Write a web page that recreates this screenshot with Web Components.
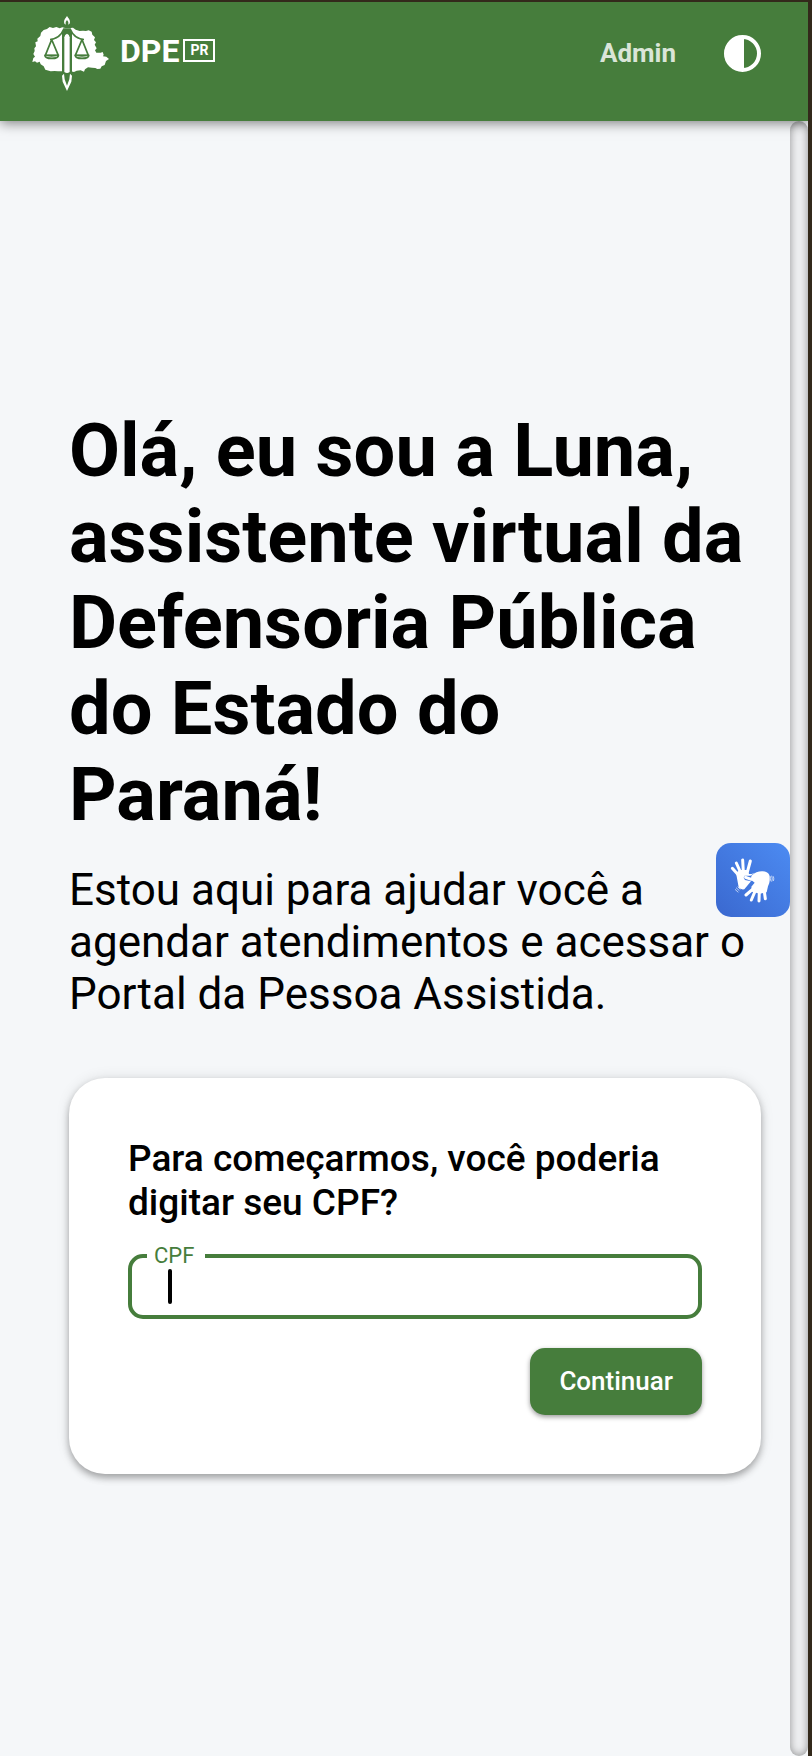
<!DOCTYPE html>
<html lang="pt-BR">
<head>
<meta charset="utf-8">
<meta name="viewport" content="width=device-width, initial-scale=1">
<title>Luna - Defensoria Pública do Estado do Paraná</title>
<style>
    body {
        margin: 0;
        font-family: Roboto, "Liberation Sans", sans-serif;
        color: #000;
        --green: #467d3c;
        --page: #f5f7f9;
        --frame: #33291b;
    }
</style>
</head>
<body>
<luna-app>
    <luna-header slot="header">
        <dpe-logo slot="logo"></dpe-logo>
        <a slot="nav" href="#admin">Admin</a>
        <contrast-toggle slot="nav"></contrast-toggle>
    </luna-header>
    <luna-greeting>
        <span slot="title">Olá, eu sou a Luna, assistente virtual da Defensoria Pública do Estado do Paraná!</span>
        <span slot="text">Estou aqui para ajudar você a agendar atendimentos e acessar o Portal da Pessoa Assistida.</span>
    </luna-greeting>
    <cpf-card>Para começarmos, você poderia digitar seu CPF?</cpf-card>
    <libras-button slot="float"></libras-button>
</luna-app>

<script>
class BaseElement extends HTMLElement {
    constructor() {
        super();
        this.attachShadow({ mode: 'open' });
        this.shadowRoot.innerHTML = this.getStyles() + this.getTemplate();
    }
}

class LunaApp extends BaseElement {
    getTemplate() {
        return `
        <slot name="header"></slot>
        <div class="body">
            <main><slot></slot></main>
            <div class="track"></div>
            <slot name="float"></slot>
        </div>
        `;
    }
    getStyles() {
        return `
            <style>
                :host {
                    display: flex;
                    flex-direction: column;
                    box-sizing: border-box;
                    min-height: 100vh;
                    border-top: 2px solid var(--frame);
                    border-right: 4px solid var(--frame);
                    background: var(--page);
                }
                .body {
                    flex: 1;
                    display: flex;
                    position: relative;
                }
                main {
                    flex: 1;
                    display: flex;
                    flex-direction: column;
                    justify-content: center;
                    gap: 58px;
                    padding: 28px 29px 24px 69px;
                }
                .track {
                    width: 18px;
                    border-radius: 9px;
                    background: #eeeff1;
                    box-shadow: inset 0 0 8px rgba(0, 0, 0, .4);
                }
            </style>
        `;
    }
}

class LunaHeader extends BaseElement {
    getTemplate() {
        return `
        <header>
            <slot name="logo"></slot>
            <nav><slot name="nav"></slot></nav>
        </header>
        `;
    }
    getStyles() {
        return `
            <style>
                :host {
                    display: block;
                    position: relative;
                    z-index: 1;
                }
                header {
                    display: flex;
                    justify-content: space-between;
                    align-items: flex-start;
                    height: 119px;
                    box-sizing: border-box;
                    padding: 14px 47px 0 32px;
                    background: var(--green);
                    box-shadow: 0 2px 12px rgba(0, 0, 0, .5);
                    clip-path: inset(0 0 -30px 0);
                }
                nav {
                    display: flex;
                    align-items: center;
                    gap: 48px;
                    height: 74px;
                }
                ::slotted(a) {
                    color: #dae5d8;
                    font-size: 26px;
                    font-weight: 700;
                    text-decoration: none;
                }
            </style>
        `;
    }
}

class DpeLogo extends BaseElement {
    getTemplate() {
        return `
        <svg width="78" height="75" viewBox="12 12 234 225" aria-hidden="true">
            <path fill="#fff" d="M13 150l3-12 5-4-5-8 4-9-1-8 5-6-2-12 7-3-1-8 9-8 2-10 8-8 10-3 8-6 10 3 10-3 10 4 8-3 8 2h16l8-1 8 6 12 4 10-1 9 1 8-2 9 4 2 9 8 8-3 8 6 7-4 7 6 11-5 6 4 7h13l6-2 3 8-2 5 10 1 8 7-9 6-4 12-9 4-4 7-9 1-6-3-10-1-12-1-9 6-3 7-10-4-12 1-8 4-10-2H90l-10-1-12 1-16-5-5-10-9-6-3-8-8 3-6-4z"/>
            <path fill="#467d3c" d="M102 188V66q-14 18-36 19v-5q28-2 40-31h22q12 29 40 31v5q-22-1-36-19v122z"/>
            <path fill="none" stroke="#467d3c" stroke-width="5" stroke-linejoin="round" d="M71 83l-19 47h39zM162 83l-20 47h39z"/>
            <path fill="#467d3c" d="M48 128h46q0 14-23 14t-23-14zM139 128h46q0 14-23 14t-23-14z"/>
            <path fill="none" stroke="#fff" stroke-width="2" d="M55 133q16 5 32 0M146 133q16 5 32 0"/>
            <path fill="#fff" d="M109 180V76q1-9 8-11 7 2 8 11v104q-8 6-16 0z"/>
            <path fill="#fff" d="M117 12c5 7 9 12 9 18q0 6-5 8v-8l-4-6-4 6v8q-5-2-5-8c0-6 4-11 9-18z"/>
            <path fill="#fff" d="M102 191l6-6 2 17 7 19 7-19 2-17 6 6-2 18-13 28-13-28z"/>
        </svg>
        <span class="name">DPE</span><span class="uf">PR</span>
        `;
    }
    getStyles() {
        return `
            <style>
                :host {
                    display: flex;
                    align-items: flex-start;
                    color: #fff;
                    font-weight: 700;
                }
                .name {
                    margin: 16px 4px 0 10px;
                    font-size: 32px;
                    line-height: 38px;
                }
                .uf {
                    box-sizing: border-box;
                    width: 32px;
                    margin-top: 23px;
                    border: 2px solid #fff;
                    font-size: 14px;
                    line-height: 19px;
                    text-align: center;
                }
            </style>
        `;
    }
}

class ContrastToggle extends BaseElement {
    getTemplate() {
        return `
        <button type="button" aria-label="Alto contraste">
            <svg width="37" height="37" viewBox="0 0 37 37">
                <circle cx="18.5" cy="18.5" r="16.5" fill="none" stroke="#fff" stroke-width="4"/>
                <path fill="#fff" d="M20 1v35h-2A17 17 0 0 1 18 1z"/>
            </svg>
        </button>
        `;
    }
    getStyles() {
        return `
            <style>
                :host {
                    display: block;
                }
                button {
                    display: block;
                    padding: 0;
                    border: 0;
                    background: none;
                    cursor: pointer;
                }
                svg {
                    display: block;
                }
            </style>
        `;
    }
}

class LunaGreeting extends BaseElement {
    getTemplate() {
        return `
        <h1><slot name="title"></slot></h1>
        <p><slot name="text"></slot></p>
        `;
    }
    getStyles() {
        return `
            <style>
                :host {
                    display: block;
                }
                h1 {
                    margin: 0 0 26px;
                    font-size: 74px;
                    line-height: 86px;
                    font-weight: 700;
                }
                p {
                    margin: 0;
                    font-size: 44px;
                    line-height: 52px;
                }
            </style>
        `;
    }
}

class CpfCard extends BaseElement {
    getTemplate() {
        return `
        <form onsubmit="return false">
            <h2><slot></slot></h2>
            <fieldset>
                <legend><label for="cpf">CPF</label></legend>
                <div class="field">
                    <i class="caret"></i>
                    <input id="cpf" type="text" inputmode="numeric" autocomplete="off">
                </div>
            </fieldset>
            <button type="submit">Continuar</button>
        </form>
        `;
    }
    getStyles() {
        return `
            <style>
                :host {
                    display: block;
                }
                form {
                    display: flex;
                    flex-direction: column;
                    padding: 59px;
                    border-radius: 36px;
                    background: #fff;
                    box-shadow: 0 4px 7px rgba(0, 0, 0, .3), 0 0 14px rgba(0, 0, 0, .1);
                }
                h2 {
                    margin: 0 0 18px;
                    font-size: 37px;
                    line-height: 44px;
                    font-weight: 500;
                }
                fieldset {
                    min-width: 0;
                    margin: 0 0 29px;
                    padding: 0;
                    border: 4px solid var(--green);
                    border-radius: 15px;
                }
                legend {
                    margin-left: 15px;
                    padding: 0 11px 0 7px;
                    color: var(--green);
                    font-size: 22px;
                    line-height: 26px;
                }
                .field {
                    display: flex;
                    align-items: flex-start;
                    height: 46px;
                    padding-left: 36px;
                }
                .caret {
                    width: 4px;
                    height: 35px;
                    border-radius: 2px;
                    background: #000;
                }
                input {
                    flex: 1;
                    min-width: 0;
                    height: 35px;
                    padding: 0;
                    border: 0;
                    outline: 0;
                    background: none;
                    font: 30px Roboto, sans-serif;
                    caret-color: transparent;
                }
                button {
                    align-self: flex-end;
                    height: 67px;
                    padding: 0 29px;
                    border: 0;
                    border-radius: 15px;
                    background: var(--green);
                    box-shadow: 0 2px 5px rgba(0, 0, 0, .4);
                    color: #fff;
                    font: 500 26px Roboto, sans-serif;
                    cursor: pointer;
                }
            </style>
        `;
    }
}

class LibrasButton extends BaseElement {
    getTemplate() {
        return `
        <button type="button" aria-label="Conteúdo acessível em Libras">
            <svg width="74" height="74" viewBox="48 39 222 222">
                <g fill="none" stroke="#fff" stroke-linecap="round" stroke-linejoin="round" stroke-width="9">
                    <path d="M116 136L97 115M122 128L109 99M130 126L128 90M141 130L151 93"/>
                    <path d="M160 176L138 195M166 182L154 210M178 184L177 213M192 178L196 206M168 140L154 148L137 142"/>
                </g>
                <path fill="#fff" d="M108 128l12-8h22l5 12 8 0 10-4-14 9-17 0-3 6 4 7 18 4-10 12-10 12q-12 2-17-6z"/>
                <path fill="#fff" d="M154 137q16-14 34-13 14 0 20 11 4 18-4 34l-4 18-20 4-24-6-2-15 10-12-10-8z"/>
                <path fill="none" stroke="#fff" stroke-width="2" d="M210 138q4 8 0 16M215 137q4 9 0 18M220 139q3 8 0 14M105 178l10 9M108 173l10 9M113 170l8 8"/>
            </svg>
        </button>
        `;
    }
    getStyles() {
        return `
            <style>
                :host {
                    display: block;
                    position: absolute;
                    top: 722px;
                    right: 18px;
                }
                button {
                    display: block;
                    padding: 0;
                    border: 0;
                    border-radius: 15px;
                    background: linear-gradient(45deg, #3a68cf, #4c8bf2);
                    cursor: pointer;
                }
                svg {
                    display: block;
                }
            </style>
        `;
    }
}

customElements.define('luna-app', LunaApp);
customElements.define('luna-header', LunaHeader);
customElements.define('dpe-logo', DpeLogo);
customElements.define('contrast-toggle', ContrastToggle);
customElements.define('luna-greeting', LunaGreeting);
customElements.define('cpf-card', CpfCard);
customElements.define('libras-button', LibrasButton);
</script>
</body>
</html>
